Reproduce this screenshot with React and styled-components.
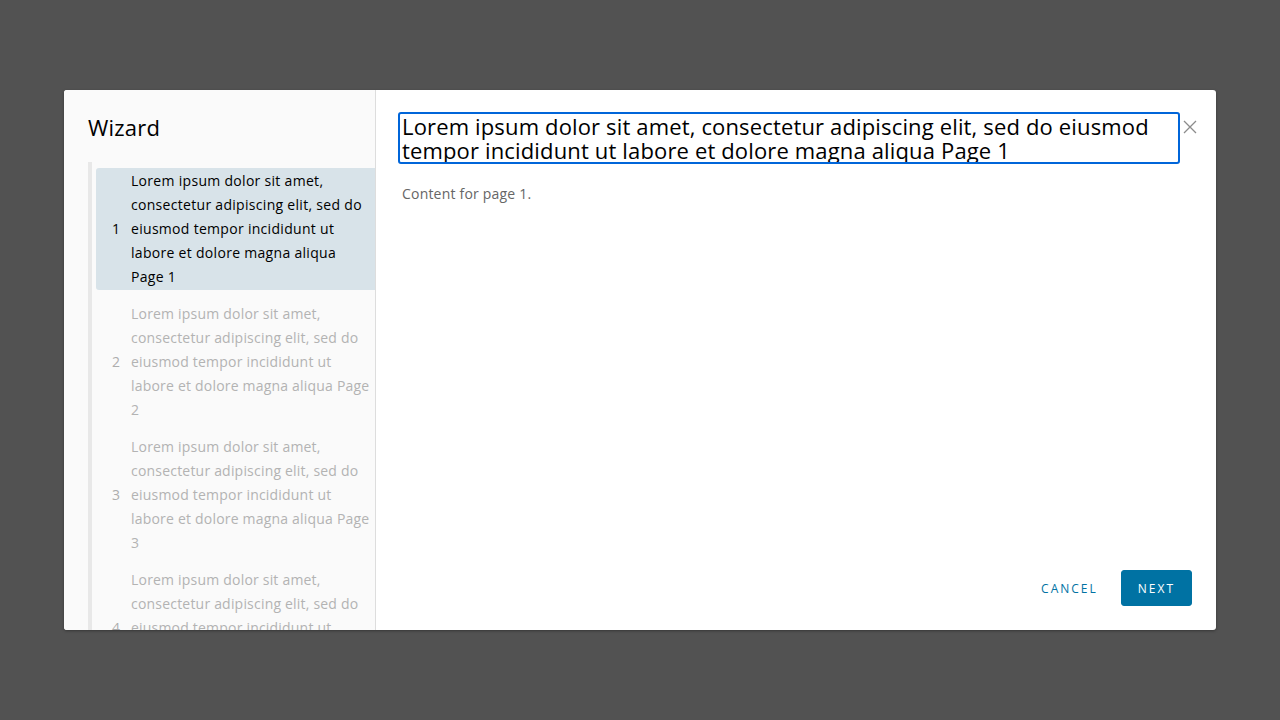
import React from "react";
import styled, { createGlobalStyle } from "styled-components";

const Global = createGlobalStyle`
  html, body { margin: 0; padding: 0; }
  body {
    background: #525252;
    font-family: "Open Sans", "Noto Sans", sans-serif;
    width: 1280px;
    height: 720px;
    overflow: hidden;
  }
`;

const Backdrop = styled.div`
  width: 1280px;
  height: 720px;
  background: #525252;
  padding: 90px 64px;
  box-sizing: border-box;
`;

const Modal = styled.div`
  display: flex;
  width: 1152px;
  height: 540px;
  background: #fff;
  border-radius: 3px;
  overflow: hidden;
  box-shadow: 0 1px 3px rgba(0, 0, 0, 0.35);
`;

const Nav = styled.div`
  width: 312px;
  flex: none;
  background: #fafafa;
  border-right: 1px solid #dddddd;
  padding: 24px 0 0 24px;
  box-sizing: border-box;
  display: flex;
  flex-direction: column;
  overflow: hidden;
`;

const NavTitle = styled.div`
  flex: none;
  font-size: 22px;
  line-height: 26px;
  color: #000;
  height: 48px;
  letter-spacing: 0.2px;
`;

const StepList = styled.ol`
  list-style: none;
  margin: 0;
  padding: 6px 0 0 4px;
  border-left: 4px solid #e8e8e8;
  flex: 1 0 auto;
`;

const Step = styled.li`
  display: flex;
  align-items: center;
  padding: 1px 0;
  margin-bottom: 11px;
  border-radius: 3px 0 0 3px;
  background: ${(p) => (p.$active ? "#d8e3e9" : "transparent")};
  color: ${(p) => (p.$active ? "#000" : "#b3b3b3")};
  font-size: 14px;
  line-height: 24px;
`;

const StepNum = styled.span`
  width: 35px;
  flex: none;
  text-align: center;
  padding-left: 5px;
  box-sizing: border-box;
  color: ${(p) => (p.$active ? "#000" : "#adadad")};
`;

const StepText = styled.span`
  flex: 1;
  padding-right: ${(p) => (p.$active ? "3px" : "0")};
  letter-spacing: ${(p) => (p.$active ? "0.3px" : "0.2px")};
`;

const Main = styled.div`
  flex: 1;
  display: flex;
  flex-direction: column;
  padding: 24px;
  box-sizing: border-box;
`;

const Header = styled.div`
  display: flex;
  align-items: flex-start;
  gap: 5px;
  margin-right: -5px;
`;

const Title = styled.h3`
  flex: 1;
  margin: 0;
  font-weight: 400;
  font-size: 22px;
  line-height: 24px;
  letter-spacing: 0.15px;
  color: #000;
  padding-left: 2px;
  outline: 2px solid #0065d9;
  border-radius: 1px;
`;

const Close = styled.button`
  border: 0;
  background: none;
  padding: 0;
  width: 14px;
  height: 16px;
  margin-top: 5px;
  display: flex;
  align-items: center;
  justify-content: center;
  cursor: pointer;
`;

const Body = styled.div`
  flex: 1;
  padding-top: 20px;
  padding-left: 2px;
  font-size: 14px;
  line-height: 24px;
  letter-spacing: 0.2px;
  color: #666;
`;

const Footer = styled.div`
  display: flex;
  justify-content: flex-end;
  align-items: center;
  gap: 12px;
`;

const Btn = styled.button`
  height: 36px;
  padding: 0 ${(p) => (p.$primary ? "16px" : "10px")};
  border-radius: 3px;
  border: 1px solid ${(p) => (p.$primary ? "#0072a3" : "transparent")};
  background: ${(p) => (p.$primary ? "#0072a3" : "transparent")};
  color: ${(p) => (p.$primary ? "#fff" : "#0072a3")};
  font-family: "Open Sans", "Noto Sans", sans-serif;
  font-size: 12px;
  font-weight: 500;
  letter-spacing: 2px;
  text-transform: uppercase;
  cursor: pointer;
`;

const lorem =
  "Lorem ipsum dolor sit amet, consectetur adipiscing elit, sed do eiusmod tempor incididunt ut labore et dolore magna aliqua";

const steps = [1, 2, 3, 4];

export default function App() {
  return (
    <>
      <Global />
      <Backdrop>
        <Modal>
          <Nav>
            <NavTitle>Wizard</NavTitle>
            <StepList>
              {steps.map((n) => (
                <Step key={n} $active={n === 1}>
                  <StepNum $active={n === 1}>{n}</StepNum>
                  <StepText $active={n === 1}>
                    {lorem} Page {n}
                  </StepText>
                </Step>
              ))}
            </StepList>
          </Nav>
          <Main>
            <Header>
              <Title>{lorem} Page 1</Title>
              <Close aria-label="Close">
                <svg width="14" height="14" viewBox="0 0 14 14">
                  <path
                    d="M1 1 L13 13 M13 1 L1 13"
                    stroke="#8c8c8c"
                    strokeWidth="1.3"
                    fill="none"
                  />
                </svg>
              </Close>
            </Header>
            <Body>Content for page 1.</Body>
            <Footer>
              <Btn>Cancel</Btn>
              <Btn $primary>Next</Btn>
            </Footer>
          </Main>
        </Modal>
      </Backdrop>
    </>
  );
}
